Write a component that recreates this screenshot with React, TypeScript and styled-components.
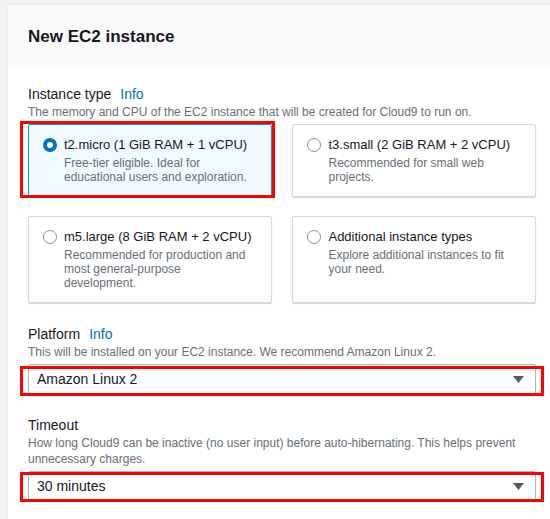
import React from 'react';
import styled, {createGlobalStyle} from 'styled-components';

const GlobalStyle = createGlobalStyle`
  html, body {
    margin: 0;
    padding: 0;
    background: #f2f3f3;
    overflow: hidden;
  }
  body {
    font-family: "Liberation Sans", Arial, sans-serif;
    color: #16191f;
  }
`;

const Page = styled.div`
  padding: 4px 0 0 7px;
  width: 560px;
`;

const Card = styled.section`
  width: 550px;
  box-sizing: border-box;
  background: #fff;
  border: 1px solid #eaeded;
`;

const Header = styled.header`
  height: 63px;
  background: #fafafa;
  padding: 0 20px;
  display: flex;
  align-items: center;
  h2 {
    margin: 0;
    font-size: 17px;
    font-weight: bold;
    color: #16191f;
  }
`;

const Body = styled.div`
  padding: 16px 20px 30px;
  display: flex;
  flex-direction: column;
  gap: 21px;
`;

const Field = styled.div`
  display: flex;
  flex-direction: column;
`;

const Label = styled.div`
  font-size: 14px;
  line-height: 20px;
  display: flex;
  gap: 9px;
  a {
    color: #0073bb;
    text-decoration: none;
  }
`;

const Description = styled.div`
  font-size: 12px;
  line-height: 16px;
  color: #687078;
  margin-bottom: 4px;
`;

const TileGrid = styled.div`
  display: grid;
  grid-template-columns: 1fr 1fr;
  column-gap: 20px;
  row-gap: 19px;
`;

const Marked = styled.div`
  position: relative;
`;

const Highlight = styled.span<{ $inset: string }>`
  position: absolute;
  inset: ${p => p.$inset};
  border: 3px solid #ff0000;
  pointer-events: none;
`;

const Tile = styled.label<{ $selected?: boolean }>`
  display: flex;
  gap: 7px;
  height: 100%;
  box-sizing: border-box;
  padding: 11px 20px 12px 14px;
  border: 1px solid ${p => (p.$selected ? '#00a1c9' : '#d5dbdb')};
  border-radius: 2px;
  background: ${p => (p.$selected ? '#f1faff' : '#fff')};
  box-shadow: 0 1px 1px rgba(0, 28, 36, 0.2);
`;

const Radio = styled.span<{ $checked?: boolean }>`
  flex: none;
  width: 14px;
  height: 14px;
  margin-top: 2px;
  box-sizing: border-box;
  border-radius: 50%;
  background: #fff;
  border: ${p => (p.$checked ? '4px solid #0073bb' : '1.5px solid #879596')};
`;

const TileText = styled.div`
  display: flex;
  flex-direction: column;
  gap: 2px;
  .title {
    font-size: 13px;
    line-height: 18px;
    color: #16191f;
    white-space: nowrap;
  }
  .desc {
    font-size: 12px;
    line-height: 14px;
    color: #687078;
  }
`;

const Select = styled.div`
  height: 30px;
  box-sizing: border-box;
  border: 1px solid #aab7b8;
  border-radius: 2px;
  background: #fff;
  padding: 0 11px 0 8px;
  display: flex;
  align-items: center;
  justify-content: space-between;
  font-size: 14px;
  color: #16191f;
`;

type TileData = { title: string; desc: string; selected?: boolean };

const tiles: TileData[] = [
  {title: 't2.micro (1 GiB RAM + 1 vCPU)', desc: 'Free-tier eligible. Ideal for educational users and exploration.', selected: true},
  {title: 't3.small (2 GiB RAM + 2 vCPU)', desc: 'Recommended for small web projects.'},
  {title: 'm5.large (8 GiB RAM + 2 vCPU)', desc: 'Recommended for production and most general-purpose development.'},
  {title: 'Additional instance types', desc: 'Explore additional instances to fit your need.'},
];

const Caret = () => (
  <svg width="11" height="7" viewBox="0 0 11 7">
    <polygon points="0,0 11,0 5.5,7" fill="#545b64" />
  </svg>
);

const InstanceTile = ({t}: { t: TileData }) => (
  <Tile $selected={t.selected}>
    <Radio $checked={t.selected} />
    <TileText>
      <span className='title'>{t.title}</span>
      <span className='desc'>{t.desc}</span>
    </TileText>
  </Tile>
);

const App = () => {
  return (
    <Page>
      <GlobalStyle />
      <Card>
        <Header>
          <h2>New EC2 instance</h2>
        </Header>
        <Body>
          <Field>
            <Label>Instance type <a href='#'>Info</a></Label>
            <Description>The memory and CPU of the EC2 instance that will be created for Cloud9 to run on.</Description>
            <TileGrid>
              {tiles.map(t =>
                t.selected ? (
                  <Marked key={t.title}>
                    <InstanceTile t={t} />
                    <Highlight $inset='-3px -3px -1px -8px' />
                  </Marked>
                ) : (
                  <InstanceTile key={t.title} t={t} />
                )
              )}
            </TileGrid>
          </Field>
          <Field>
            <Label>Platform <a href='#'>Info</a></Label>
            <Description>This will be installed on your EC2 instance. We recommend Amazon Linux 2.</Description>
            <Marked>
              <Select>
                <span>Amazon Linux 2</span>
                <Caret />
              </Select>
              <Highlight $inset='2px -8px -2px -8px' />
            </Marked>
          </Field>
          <Field>
            <Label>Timeout</Label>
            <Description>How long Cloud9 can be inactive (no user input) before auto-hibernating. This helps prevent unnecessary charges.</Description>
            <Marked>
              <Select>
                <span>30 minutes</span>
                <Caret />
              </Select>
              <Highlight $inset='1px -8px -1px -8px' />
            </Marked>
          </Field>
        </Body>
      </Card>
    </Page>
  );
};

export default App;
